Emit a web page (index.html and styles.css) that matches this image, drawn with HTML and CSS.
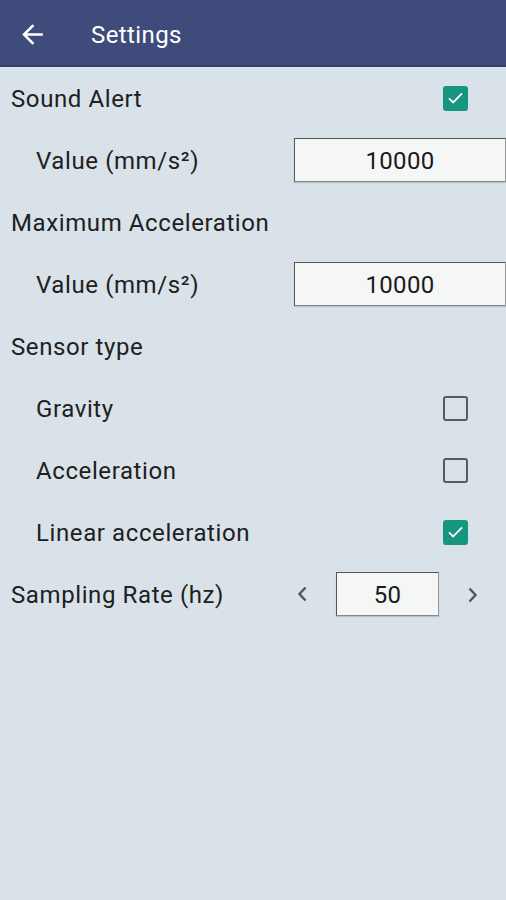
FILE: index.html
```html
<!DOCTYPE html>
<html>
<head>
<meta charset="utf-8">
<link rel="stylesheet" href="styles.css">
</head>
<body>
<header class="appbar">
  <svg class="back" width="31" height="31" viewBox="0 0 24 24"><path d="M20 11H7.83l5.59-5.59L12 4l-8 8 8 8 1.41-1.41L7.83 13H20v-2z" fill="#fff"/></svg>
  <span class="title">Settings</span>
</header>
<main class="list">
  <div class="row">
    <span class="label">Sound Alert</span>
    <span class="check on"><svg viewBox="0 0 24 24" width="24" height="24"><path d="M4.5 12.5l4.8 4.6L19.5 6.8" fill="none" stroke="#fff" stroke-width="2"/></svg></span>
  </div>
  <div class="row sub">
    <span class="label">Value (mm/s²)</span>
    <span class="field wide">10000</span>
  </div>
  <div class="row">
    <span class="label">Maximum Acceleration</span>
  </div>
  <div class="row sub">
    <span class="label">Value (mm/s²)</span>
    <span class="field wide">10000</span>
  </div>
  <div class="row">
    <span class="label">Sensor type</span>
  </div>
  <div class="row sub">
    <span class="label">Gravity</span>
    <span class="check"></span>
  </div>
  <div class="row sub">
    <span class="label">Acceleration</span>
    <span class="check"></span>
  </div>
  <div class="row sub">
    <span class="label">Linear acceleration</span>
    <span class="check on"><svg viewBox="0 0 24 24" width="24" height="24"><path d="M4.5 12.5l4.8 4.6L19.5 6.8" fill="none" stroke="#fff" stroke-width="2"/></svg></span>
  </div>
  <div class="row">
    <span class="label">Sampling Rate (hz)</span>
    <div class="stepper">
      <svg class="arrow" width="14" height="20" viewBox="0 0 14 20"><path d="M10.5 3.5L4.5 10l6 6.5" fill="none" stroke="#555" stroke-width="2.4"/></svg>
      <span class="field small">50</span>
      <svg class="arrow" width="14" height="20" viewBox="0 0 14 20"><path d="M3.5 4.5l6 6.5-6 6.5" fill="none" stroke="#555" stroke-width="2.4"/></svg>
    </div>
  </div>
</main>
</body>
</html>
```
FILE: styles.css
```css
html, body {
  margin: 0;
  padding: 0;
  background: #d9e2e9;
  font-family: Roboto, "Noto Sans", "Liberation Sans", sans-serif;
}
body {
  width: 506px;
  height: 900px;
  overflow: hidden;
}
.appbar {
  height: 65px;
  background: #3f4b7a;
  border-bottom: 2px solid #323d69;
  display: flex;
  align-items: center;
  padding-left: 17px;
  box-sizing: content-box;
}
.back {
  margin-top: 4px;
}
.title {
  color: #fff;
  font-size: 24px;
  margin-left: 43px;
  margin-top: 4px;
  letter-spacing: 0.4px;
}
.list {
  display: flex;
  flex-direction: column;
}
.row {
  height: 62px;
  display: flex;
  align-items: center;
  padding-left: 11px;
  color: #202020;
  font-size: 24px;
}
.row.sub {
  padding-left: 36px;
}
.label {
  flex: 1;
  letter-spacing: 0.6px;
  margin-top: 1px;
}
.check {
  box-sizing: border-box;
  width: 25px;
  height: 25px;
  border: 2px solid #5a5a5a;
  border-radius: 3px;
  margin-right: 38px;
  display: flex;
  align-items: center;
  justify-content: center;
}
.check.on {
  background: #16957f;
  border-color: #16957f;
}
.field {
  box-sizing: border-box;
  height: 44px;
  background: #f5f6f6;
  border: 1px solid #555;
  border-right-color: #999;
  border-bottom-color: #888;
  box-shadow: 0 1px 1px rgba(0,0,0,0.15);
  display: flex;
  align-items: center;
  justify-content: center;
  font-size: 24px;
  color: #1a1a1a;
  padding-top: 1px;
  letter-spacing: 0.3px;
}
.field.wide {
  width: 212px;
}
.stepper {
  display: flex;
  align-items: center;
  margin-right: 26px;
}
.field.small {
  width: 103px;
  margin: 0 27px 0 27px;
}
```
